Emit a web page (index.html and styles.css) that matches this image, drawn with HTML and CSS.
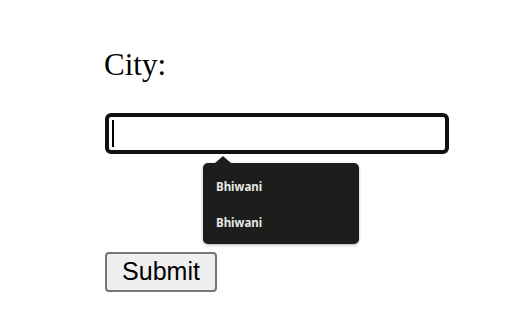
FILE: index.html
```html
<!DOCTYPE html>
<html>
<head>
<meta charset="utf-8">
<link rel="stylesheet" href="styles.css">
</head>
<body>
<form class="form">
  <div class="label">City:</div>
  <div class="field-wrap">
    <div class="field"><span class="caret"></span></div>
    <ul class="suggest">
      <li>Bhiwani</li>
      <li>Bhiwani</li>
    </ul>
  </div>
  <button type="button" class="submit">Submit</button>
</form>
</body>
</html>
```

FILE: styles.css
```css
html, body {
  margin: 0;
  padding: 0;
  background: #ffffff;
}
.form {
  display: flex;
  flex-direction: column;
  align-items: flex-start;
  padding: 47px 0 0 105px;
}
.label {
  font-family: "Liberation Serif", serif;
  font-size: 31px;
  line-height: 35px;
  color: #000;
  margin-left: -1px;
}
.field-wrap {
  position: relative;
  margin-top: 31px;
}
.field {
  box-sizing: border-box;
  width: 344px;
  height: 41px;
  border: 4px solid #111111;
  border-radius: 6px;
  background: #fff;
  display: flex;
  align-items: center;
  padding-left: 3px;
}
.caret {
  display: block;
  width: 2px;
  height: 27px;
  background: #000;
}
.suggest {
  position: absolute;
  left: 98px;
  top: 50px;
  width: 156px;
  height: 81px;
  box-sizing: border-box;
  margin: 0;
  padding: 10px 0 0 0;
  list-style: none;
  background: #1b1e1a;
  border-radius: 5px;
  box-shadow: 0 1px 3px rgba(0,0,0,0.3);
  font-family: "Noto Sans", "Open Sans", sans-serif;
  font-weight: 700;
  font-size: 11.5px;
  color: #e6e8e6;
}
.suggest::before {
  content: "";
  position: absolute;
  left: 12px;
  top: -7px;
  border-left: 8px solid transparent;
  border-right: 8px solid transparent;
  border-bottom: 7px solid #1b1e1a;
}
.suggest li {
  height: 36px;
  line-height: 28px;
  padding-left: 13px;
}
.submit {
  margin-top: 98px;
  box-sizing: border-box;
  width: 112px;
  height: 40px;
  padding: 0 0 2px 0;
  border: 2px solid #767676;
  border-radius: 4px;
  background: #efefef;
  font-family: "Liberation Sans", Arial, sans-serif;
  font-size: 25px;
  color: #000;
}
```
